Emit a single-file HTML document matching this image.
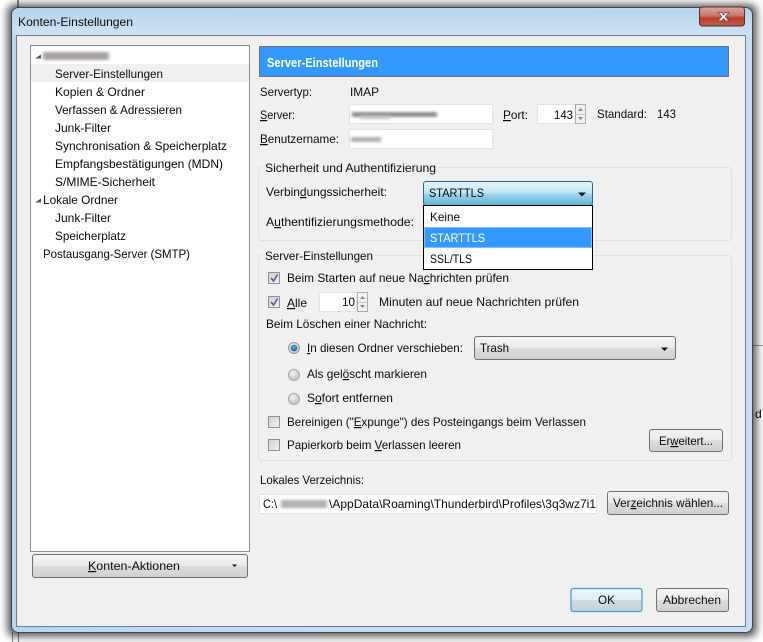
<!DOCTYPE html>
<html><head><meta charset="utf-8"><title>Konten-Einstellungen</title>
<style>
html,body{margin:0;padding:0;background:#fff;width:763px;height:642px;overflow:hidden}
svg{display:block;position:absolute;left:0;top:0}
text{font-family:"Liberation Sans",sans-serif;font-size:12px;fill:#0a0a0a}
.u{text-decoration:underline}
</style></head><body>
<svg width="763" height="642" viewBox="0 0 763 642" xmlns="http://www.w3.org/2000/svg">
<defs>
<linearGradient id="fr" x1="0" y1="0" x2="1" y2="0"><stop offset="0" stop-color="#b9d6ef"/><stop offset=".45" stop-color="#c3dcf2"/><stop offset="1" stop-color="#c5def3"/></linearGradient>
<linearGradient id="tb" x1="0" y1="0" x2="0" y2="1"><stop offset="0" stop-color="#b5d3ee"/><stop offset="1" stop-color="#cfe3f5"/></linearGradient>
<linearGradient id="btn" x1="0" y1="0" x2="0" y2="1"><stop offset="0" stop-color="#f4f4f4"/><stop offset=".48" stop-color="#ebebeb"/><stop offset=".5" stop-color="#dddddd"/><stop offset="1" stop-color="#cfcfcf"/></linearGradient>
<linearGradient id="okb" x1="0" y1="0" x2="0" y2="1"><stop offset="0" stop-color="#eaf6fb"/><stop offset=".48" stop-color="#e2eff5"/><stop offset=".5" stop-color="#d0dde4"/><stop offset="1" stop-color="#c6d4da"/></linearGradient>
<linearGradient id="cmb" x1="0" y1="0" x2="0" y2="1"><stop offset="0" stop-color="#e6f5fb"/><stop offset=".48" stop-color="#bfe5f5"/><stop offset=".52" stop-color="#a0d6ee"/><stop offset="1" stop-color="#5fb0d6"/></linearGradient>
<linearGradient id="cl" x1="0" y1="0" x2="0" y2="1"><stop offset="0" stop-color="#dca59f"/><stop offset=".45" stop-color="#c9766c"/><stop offset=".6" stop-color="#c03a26"/><stop offset="1" stop-color="#b8655a"/></linearGradient>
<linearGradient id="chk" x1="0" y1="0" x2="1" y2="1"><stop offset="0" stop-color="#cfcfcf"/><stop offset="1" stop-color="#f4f4f4"/></linearGradient>
<radialGradient id="rad" cx=".4" cy=".35" r=".7"><stop offset="0" stop-color="#f4f4f4"/><stop offset="1" stop-color="#bdbdbd"/></radialGradient>
<radialGradient id="rdot" cx=".5" cy=".4" r=".6"><stop offset="0" stop-color="#5cc0ee"/><stop offset="1" stop-color="#0a4f80"/></radialGradient>
<filter id="sh" x="-5%" y="-5%" width="110%" height="110%"><feGaussianBlur stdDeviation="4"/></filter>
<filter id="bl" x="-20%" y="-100%" width="140%" height="300%"><feGaussianBlur stdDeviation="1.6 1.2"/></filter>
</defs>

<rect width="763" height="642" fill="#fff"/>
<rect x="17" y="0" width="2" height="8" fill="#8a8a8a"/>
<rect x="12" y="632" width="1" height="10" fill="#888"/><rect x="18" y="632" width="1" height="10" fill="#888"/>
<rect x="750" y="345" width="13" height="1" fill="#999"/>
<text x="755" y="418" textLength="8">d</text>

<!-- window -->
<rect x="7" y="4" width="750" height="633" rx="8" fill="#000" opacity=".62" filter="url(#sh)"/>
<rect x="11.5" y="7.5" width="741" height="625" rx="7" fill="url(#fr)" stroke="#3c4650"/>
<rect x="12.5" y="8.5" width="739" height="28" rx="6" fill="url(#tb)"/>
<rect x="16.5" y="35.5" width="729" height="591" fill="#f0f0f0" stroke="#6c7c8c"/>
<text x="18" y="26" textLength="115" lengthAdjust="spacingAndGlyphs">Konten-Einstellungen</text>

<!-- close -->
<rect x="699.5" y="7" width="45" height="19" rx="3" fill="url(#cl)" stroke="#5a2a28"/>
<path d="M718 12.5l3.5 0 2 2.5 2-2.5 3.5 0-3.7 4 3.7 4.5-3.5 0-2-2.5-2 2.5-3.5 0 3.7-4.5z" fill="#eee" stroke="#5a4a48" stroke-width=".7"/>

<!-- list -->
<rect x="30.5" y="45.5" width="219" height="506" fill="#fff" stroke="#8a8f96"/>
<rect x="31" y="64" width="218" height="18" fill="#f0f0f0"/>
<path d="M35 58.5l6-4v4z" fill="#555"/>
<rect x="43" y="52" width="66" height="8" fill="#a8a2a8" filter="url(#bl)"/>
<text x="55" y="78" textLength="108" lengthAdjust="spacingAndGlyphs">Server-Einstellungen</text>
<text x="55" y="96" textLength="90" lengthAdjust="spacingAndGlyphs">Kopien &amp; Ordner</text>
<text x="55" y="114" textLength="127" lengthAdjust="spacingAndGlyphs">Verfassen &amp; Adressieren</text>
<text x="55" y="132" textLength="56" lengthAdjust="spacingAndGlyphs">Junk-Filter</text>
<text x="55" y="150" textLength="172" lengthAdjust="spacingAndGlyphs">Synchronisation &amp; Speicherplatz</text>
<text x="55" y="168" textLength="168" lengthAdjust="spacingAndGlyphs">Empfangsbestätigungen (MDN)</text>
<text x="55" y="186" textLength="100" lengthAdjust="spacingAndGlyphs">S/MIME-Sicherheit</text>
<path d="M35 202.5l6-4v4z" fill="#555"/>
<text x="43" y="204" textLength="75" lengthAdjust="spacingAndGlyphs">Lokale Ordner</text>
<text x="55" y="222" textLength="56" lengthAdjust="spacingAndGlyphs">Junk-Filter</text>
<text x="55" y="240" textLength="71" lengthAdjust="spacingAndGlyphs">Speicherplatz</text>
<text x="43" y="258" textLength="147" lengthAdjust="spacingAndGlyphs">Postausgang-Server (SMTP)</text>

<!-- Konten-Aktionen -->
<rect x="32.5" y="554.5" width="215" height="23" rx="2.5" fill="url(#btn)" stroke="#707070"/>
<text x="88" y="570" textLength="92" lengthAdjust="spacingAndGlyphs"><tspan class="u">K</tspan>onten-Aktionen</text>
<path d="M232 564.5h5l-2.5 2.5z" fill="#111"/>

<!-- header -->
<rect x="258.5" y="45.5" width="471" height="32" fill="#fff"/>
<rect x="259.5" y="46.5" width="469" height="30" fill="#3399ff" stroke="#6e6e6e"/>
<text x="267" y="67" textLength="111" lengthAdjust="spacingAndGlyphs" style="font-weight:bold;font-size:13px;fill:#fff">Server-Einstellungen</text>

<!-- server -->
<text x="260" y="96" textLength="52" lengthAdjust="spacingAndGlyphs">Servertyp:</text>
<text x="350" y="96" textLength="29" lengthAdjust="spacingAndGlyphs">IMAP</text>
<text x="260" y="119" textLength="35" lengthAdjust="spacingAndGlyphs"><tspan class="u">S</tspan>erver:</text>
<rect x="349.5" y="104.5" width="143" height="19" fill="#fff" stroke="#e2e3e6"/>
<rect x="352" y="112" width="85" height="5" fill="#8f8f8f" filter="url(#bl)"/>
<rect x="360" y="116" width="30" height="3" fill="#c4c4c4" filter="url(#bl)"/>
<text x="503" y="119" textLength="25" lengthAdjust="spacingAndGlyphs"><tspan class="u">P</tspan>ort:</text>
<rect x="537.5" y="104.5" width="39" height="19" fill="#fff" stroke="#e2e3e6"/>
<text x="554" y="119" textLength="19" lengthAdjust="spacingAndGlyphs">143</text>
<rect x="575.5" y="104.5" width="10" height="19" fill="#f0f0f0" stroke="#adadad"/>
<path d="M576 114.5h9" stroke="#c8c8c8"/>
<path d="M578 111l2.5-3 2.5 3z" fill="#7a86b4"/><path d="M578 117l2.5 3 2.5-3z" fill="#7a86b4"/>
<text x="597" y="118" textLength="50" lengthAdjust="spacingAndGlyphs">Standard:</text>
<text x="657" y="118" textLength="19" lengthAdjust="spacingAndGlyphs">143</text>
<text x="260" y="143" textLength="79" lengthAdjust="spacingAndGlyphs"><tspan class="u">B</tspan>enutzername:</text>
<rect x="349.5" y="129.5" width="143" height="19" fill="#fff" stroke="#e2e3e6"/>
<rect x="351" y="137" width="30" height="5" fill="#b0b0b0" filter="url(#bl)"/>

<!-- group 1 -->
<rect x="258.5" y="167.5" width="473" height="73" rx="3" fill="none" stroke="#dce0e4"/>
<rect x="263" y="162" width="175" height="12" fill="#f0f0f0"/>
<text x="265" y="172" textLength="171" lengthAdjust="spacingAndGlyphs">Sicherheit und Authentifizierung</text>
<text x="266" y="196" textLength="121" lengthAdjust="spacingAndGlyphs">Verbin<tspan class="u">d</tspan>ungssicherheit:</text>
<text x="266" y="226" textLength="148" lengthAdjust="spacingAndGlyphs">A<tspan class="u">u</tspan>thentifizierungsmethode:</text>

<!-- group 2 -->
<rect x="258.5" y="255.5" width="473" height="205" rx="3" fill="none" stroke="#dce0e4"/>
<rect x="263" y="250" width="112" height="12" fill="#f0f0f0"/>
<text x="265" y="260" textLength="108" lengthAdjust="spacingAndGlyphs">Server-Einstellungen</text>

<rect x="268.5" y="272.5" width="11" height="11" fill="url(#chk)" stroke="#8e8f8f"/>
<path d="M271 278l2.5 3 4-6.5" fill="none" stroke="#4a5f97" stroke-width="1.6"/>
<text x="287" y="282" textLength="222" lengthAdjust="spacingAndGlyphs">Beim Starten auf neue Na<tspan class="u">c</tspan>hrichten prüfen</text>

<rect x="268.5" y="296.5" width="11" height="11" fill="url(#chk)" stroke="#8e8f8f"/>
<path d="M271 302l2.5 3 4-6.5" fill="none" stroke="#4a5f97" stroke-width="1.6"/>
<text x="287" y="307" textLength="20" lengthAdjust="spacingAndGlyphs"><tspan class="u">A</tspan>lle</text>
<rect x="319.5" y="292.5" width="37" height="19" fill="#fff" stroke="#e2e3e6"/>
<text x="342" y="306" textLength="13" lengthAdjust="spacingAndGlyphs">10</text>
<rect x="357.5" y="292.5" width="10" height="19" fill="#f0f0f0" stroke="#adadad"/>
<path d="M358 302.5h9" stroke="#c8c8c8"/>
<path d="M360 299l2.5-3 2.5 3z" fill="#7a86b4"/><path d="M360 305l2.5 3 2.5-3z" fill="#7a86b4"/>
<text x="379" y="306" textLength="200" lengthAdjust="spacingAndGlyphs">Minuten auf neue Nachrichten prüfen</text>

<text x="266" y="328" textLength="161" lengthAdjust="spacingAndGlyphs">Beim Löschen einer Nachricht:</text>

<circle cx="294" cy="348" r="5.5" fill="url(#rad)" stroke="#9a9a9a"/>
<circle cx="294" cy="348" r="3.2" fill="url(#rdot)"/>
<text x="307" y="352" textLength="156" lengthAdjust="spacingAndGlyphs"><tspan class="u">I</tspan>n diesen Ordner verschieben:</text>
<rect x="474.5" y="336.5" width="201" height="23" rx="2.5" fill="url(#btn)" stroke="#707070"/>
<text x="480" y="352" textLength="29" lengthAdjust="spacingAndGlyphs">Trash</text>
<path d="M661 347.5h7l-3.5 3.5z" fill="#111"/>

<circle cx="294" cy="375" r="5.5" fill="url(#rad)" stroke="#a8a8a8"/>
<text x="307" y="378" textLength="120" lengthAdjust="spacingAndGlyphs">Als gel<tspan class="u">ö</tspan>scht markieren</text>
<circle cx="294" cy="399" r="5.5" fill="url(#rad)" stroke="#a8a8a8"/>
<text x="307" y="402" textLength="86" lengthAdjust="spacingAndGlyphs">S<tspan class="u">o</tspan>fort entfernen</text>

<rect x="268.5" y="416.5" width="11" height="11" fill="url(#chk)" stroke="#8e8f8f"/>
<text x="287" y="426" textLength="299" lengthAdjust="spacingAndGlyphs">Bereinigen ("<tspan class="u">E</tspan>xpunge") des Posteingangs beim Verlassen</text>
<rect x="268.5" y="439.5" width="11" height="11" fill="url(#chk)" stroke="#8e8f8f"/>
<text x="287" y="449" textLength="174" lengthAdjust="spacingAndGlyphs">Papierkorb beim <tspan class="u">V</tspan>erlassen leeren</text>
<rect x="649.5" y="429.5" width="73" height="22" rx="2.5" fill="url(#btn)" stroke="#707070"/>
<text x="659" y="445" textLength="54" lengthAdjust="spacingAndGlyphs">Er<tspan class="u">w</tspan>eitert...</text>

<!-- local dir -->
<text x="260" y="484" textLength="104" lengthAdjust="spacingAndGlyphs">Lokales Verzeichnis:</text>
<rect x="259.5" y="494.5" width="337" height="19" fill="#fff" stroke="#e2e3e6"/>
<text x="263" y="508" textLength="14" lengthAdjust="spacingAndGlyphs">C:\</text>
<rect x="281" y="500" width="46" height="8" fill="#b4b4b4" filter="url(#bl)"/>
<text x="329" y="508" textLength="267" lengthAdjust="spacingAndGlyphs">\AppData\Roaming\Thunderbird\Profiles\3q3wz7i1</text>
<rect x="607.5" y="491.5" width="121" height="23" rx="2.5" fill="url(#btn)" stroke="#707070"/>
<text x="613" y="507" textLength="110" lengthAdjust="spacingAndGlyphs">Ver<tspan class="u">z</tspan>eichnis wählen...</text>

<!-- footer buttons -->
<rect x="571" y="588.5" width="71" height="23" rx="2.5" fill="url(#okb)" stroke="#3c9fc4" stroke-width="1.2"/>
<text x="598" y="604" textLength="17" lengthAdjust="spacingAndGlyphs">OK</text>
<rect x="656.5" y="588.5" width="72" height="23" rx="2.5" fill="url(#btn)" stroke="#707070"/>
<text x="663" y="604" textLength="58" lengthAdjust="spacingAndGlyphs">Abbrechen</text>

<!-- combo + dropdown (on top of groups) -->
<rect x="423.5" y="181.5" width="169" height="24" rx="2.5" fill="url(#cmb)" stroke="#2b6a8e"/>
<text x="429" y="197" textLength="55" lengthAdjust="spacingAndGlyphs">STARTTLS</text>
<path d="M578 192.5h8l-4 4z" fill="#111"/>
<rect x="423.5" y="205.5" width="169" height="64" fill="#fff" stroke="#000"/>
<rect x="424" y="227" width="168" height="21" fill="#3399ff"/>
<rect x="424.5" y="227.5" width="167" height="20" fill="none" stroke="#cfe6ff" stroke-width="1" stroke-dasharray="1 1"/>
<text x="430" y="221" textLength="30" lengthAdjust="spacingAndGlyphs">Keine</text>
<text x="430" y="242" textLength="55" lengthAdjust="spacingAndGlyphs" style="fill:#fff">STARTTLS</text>
<text x="430" y="263" textLength="42" lengthAdjust="spacingAndGlyphs">SSL/TLS</text>
</svg>
</body></html>
